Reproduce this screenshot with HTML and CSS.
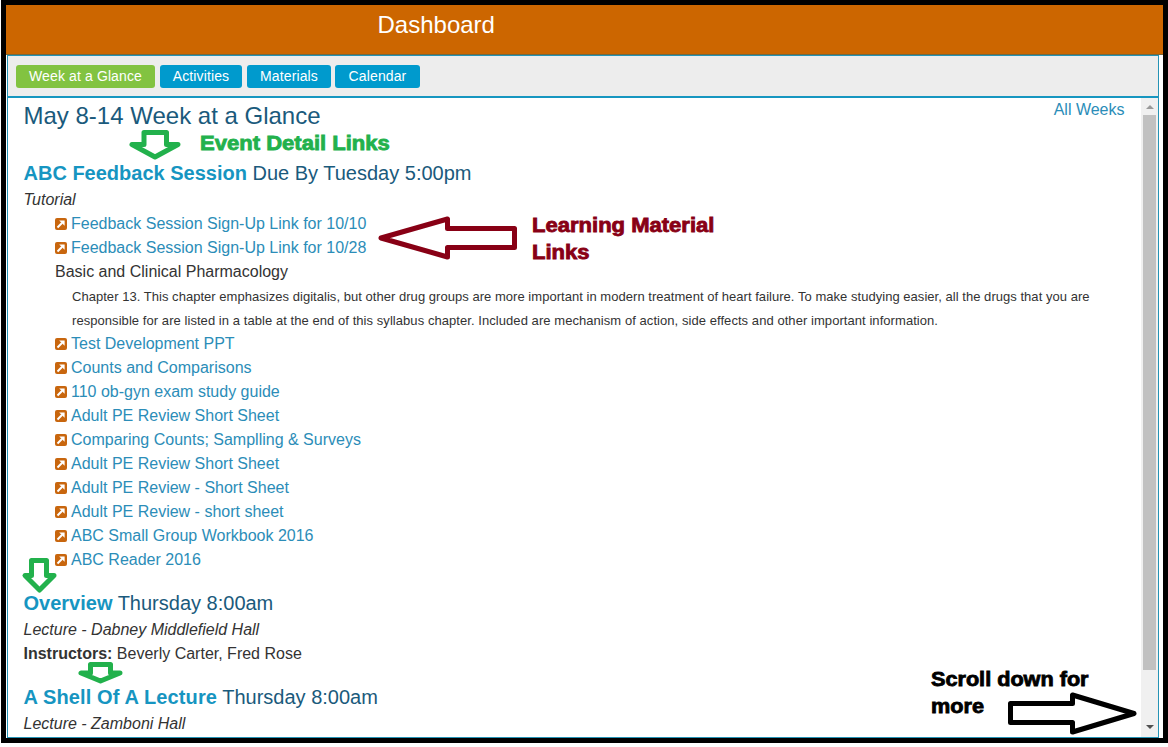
FILE: index.html
```html
<!DOCTYPE html>
<html lang="en">
<head>
<meta charset="utf-8">
<title>Dashboard</title>
<link rel="stylesheet" href="styles.css">
</head>
<body>
<svg class="symbols" aria-hidden="true"><symbol id="ext" viewBox="0 0 12 12"><rect width="12" height="12" rx="2" fill="#c8660e"/><path d="M2.5 9.5 7.2 4.8" stroke="#fff" stroke-width="2" fill="none"/><path d="M4.2 2.4h5.4v5.4z" fill="#fff"/></symbol></svg>
<div class="frame">
<header class="header"><h1 class="title">Dashboard</h1></header>
<main class="panel">
<nav class="tabs">
<a class="tab active w1">Week at a Glance</a><a class="tab w2">Activities</a><a class="tab w3">Materials</a><a class="tab w4">Calendar</a>
</nav>
<div class="body">
<div class="content">
<div class="week-row"><h2 class="week">May 8-14 Week at a Glance</h2><a class="all">All Weeks</a></div>
<section class="event first">
<h3 class="event-title"><a class="name">ABC Feedback Session</a> Due By Tuesday 5:00pm</h3>
<p class="type">Tutorial</p>
<ul class="links">
<li class="item"><svg class="icon"><use href="#ext"/></svg><a>Feedback Session Sign-Up Link for 10/10</a></li>
<li class="item"><svg class="icon"><use href="#ext"/></svg><a>Feedback Session Sign-Up Link for 10/28</a></li>
<li class="book">Basic and Clinical Pharmacology<p class="desc">Chapter 13. This chapter emphasizes digitalis, but other drug groups are more important in modern treatment of heart failure. To make studying easier, all the drugs that you are<br><span class="desc-end">responsible for are listed in a table at the end of this syllabus chapter. Included are mechanism of action, side effects and other important information.</span></p></li>
<li class="item"><svg class="icon"><use href="#ext"/></svg><a>Test Development PPT</a></li>
<li class="item"><svg class="icon"><use href="#ext"/></svg><a>Counts and Comparisons</a></li>
<li class="item"><svg class="icon"><use href="#ext"/></svg><a>110 ob-gyn exam study guide</a></li>
<li class="item"><svg class="icon"><use href="#ext"/></svg><a>Adult PE Review Short Sheet</a></li>
<li class="item"><svg class="icon"><use href="#ext"/></svg><a>Comparing Counts; Samplling &amp; Surveys</a></li>
<li class="item"><svg class="icon"><use href="#ext"/></svg><a>Adult PE Review Short Sheet</a></li>
<li class="item"><svg class="icon"><use href="#ext"/></svg><a>Adult PE Review - Short Sheet</a></li>
<li class="item"><svg class="icon"><use href="#ext"/></svg><a>Adult PE Review - short sheet</a></li>
<li class="item"><svg class="icon"><use href="#ext"/></svg><a>ABC Small Group Workbook 2016</a></li>
<li class="item"><svg class="icon"><use href="#ext"/></svg><a>ABC Reader 2016</a></li>
</ul>
</section>
<section class="event">
<h3 class="event-title"><a class="name">Overview</a> Thursday 8:00am</h3>
<p class="type">Lecture - Dabney Middlefield Hall</p>
<p class="people"><b>Instructors:</b> Beverly Carter, Fred Rose</p>
</section>
<section class="event">
<h3 class="event-title"><a class="name wide">A Shell Of A Lecture</a> Thursday 8:00am</h3>
<p class="type">Lecture - Zamboni Hall</p>
</section>
</div>
<div class="scrollbar"><span class="arrow up"></span><span class="thumb"></span><span class="arrow down"></span></div>
</div>
</main>
</div>
<svg class="marks" viewBox="0 0 1168 747" fill="none" stroke-linejoin="round">
<g stroke="#22b14c" stroke-width="5">
<path d="M144 132.500H166.500V144.500H178L155 157 132 144.500H144Z"/>
<path d="M31.500 560.500H46.500V575.500H54L39.500 590 25 575.500H31.500Z"/>
<path d="M90.500 664.500H110.500V673H120L100.500 681 81 673H90.500Z"/>
</g>
<path stroke="#880015" stroke-width="5" d="M447.500 219V228.500H514.500V247.500H447.500V257L381 238Z"/>
<path stroke="#000" stroke-width="5" d="M1072.500 695V703.500H1010.500V722.500H1072.500V732L1134 713.500Z"/>
</svg>
<p class="note green">Event Detail Links</p>
<p class="note red">Learning Material<br>Links</p>
<p class="note black">Scroll down for<br>more</p>
</body>
</html>
```
FILE: styles.css
```css
* { box-sizing: border-box; }
body { margin: 0; height: 747px; overflow: hidden; background: #fff; font: 16px/24px "Liberation Sans", Arial, sans-serif; color: #333; position: relative; }
h1, h2, h3, p, ul { margin: 0; padding: 0; font-weight: normal; }
ul { list-style: none; }
.symbols { display: none; }
.frame { margin-left: 1px; width: 1167px; height: 743px; border: 5px solid #000; display: flex; flex-direction: column; }
.header { height: 50px; flex: none; background: #cc6600; border-bottom: 1px solid #75683c; padding: 6px 0 0 371.5px; }
.title { font-size: 24px; line-height: 28px; color: #fff; }
.panel { flex: none; width: 1152px; height: 683px; margin-left: 1px; border: 1px solid #2593b5; display: flex; flex-direction: column; }
.tabs { height: 42px; flex: none; background: #ededed; border-bottom: 2px solid #1696c0; display: flex; gap: 5px; padding: 9px 0 0 8px; }
.tab { height: 23px; border-radius: 3px; background: #009acd; color: #fff; font-size: 14px; line-height: 23px; text-align: center; letter-spacing: 0.12px; }
.active { background: #82c341; }
.w1 { width: 139px; }
.w2 { width: 82px; }
.w3 { width: 84px; }
.w4 { width: 85px; margin-left: -1px; }
.body { flex: 1; min-height: 0; display: flex; }
.content { flex: 1; padding: 0 16.5px 0 15.5px; overflow: hidden; }
.week-row { display: flex; justify-content: space-between; height: 38px; }
.week { font-size: 24px; line-height: 36px; color: #1a5a7c; }
.all { color: #2b8db8; }
.event { margin-top: 15px; }
.event-title { font-size: 20px; line-height: 32px; height: 31px; color: #1a5a7c; }
.first { margin-top: 21px; }
.name { color: #1695c1; font-weight: bold; }
.wide { letter-spacing: 0.12px; }
.type { font-style: italic; }
.links { padding-left: 31.5px; }
.item { display: flex; align-items: center; gap: 4px; color: #2b8db8; }
.icon { width: 12px; height: 12px; }
.desc { font-size: 13px; padding: 1px 0 0 17px; height: 48px; white-space: nowrap; letter-spacing: 0.036px; }
.desc-end { letter-spacing: 0.06px; }
.scrollbar { width: 17px; background: #f0f0f0; display: flex; flex-direction: column; align-items: center; padding: 7px 0 8px; }
.arrow { border: 4px solid transparent; }
.up { border-top: 0; border-bottom-color: #999; }
.down { border-bottom: 0; border-top-color: #505050; margin-top: auto; }
.thumb { width: 13px; height: 555px; background: #c1c1c1; margin-top: 6px; }
.marks { position: absolute; left: 0; top: 0; width: 1168px; height: 747px; }
.note { position: absolute; font: bold 19.5px/27px "Liberation Sans", Arial, sans-serif; -webkit-text-stroke: 0.8px currentColor; white-space: nowrap; transform: scaleX(1.13); transform-origin: left; }
.green { left: 200px; top: 130px; color: #22b14c; }
.red { left: 532px; top: 212px; color: #880015; }
.black { left: 931px; top: 666px; color: #000; transform: scaleX(1.11); }
```
